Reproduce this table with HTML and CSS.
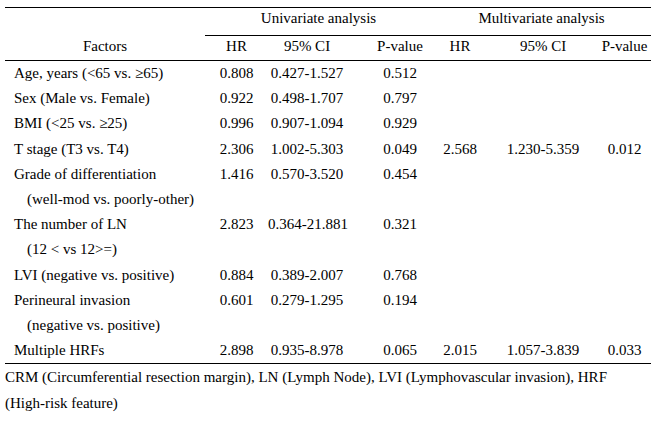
FILE: index.html
```html
<!DOCTYPE html>
<html>
<head>
<meta charset="utf-8">
<link rel="stylesheet" href="styles.css">
</head>
<body>
<div class="page">
  <table class="results">
    <colgroup>
      <col class="c-factor">
      <col class="c-hr">
      <col class="c-ci">
      <col class="c-p">
      <col class="c-hr2">
      <col class="c-ci2">
      <col class="c-p2">
    </colgroup>
    <thead>
      <tr class="head1">
        <th></th>
        <th colspan="3" class="group">Univariate analysis</th>
        <th colspan="3" class="group">Multivariate analysis</th>
      </tr>
      <tr class="head2">
        <th>Factors</th>
        <th>HR</th>
        <th>95% CI</th>
        <th class="pcol">P-value</th>
        <th>HR</th>
        <th>95% CI</th>
        <th>P-value</th>
      </tr>
    </thead>
    <tbody>
      <tr>
        <td class="factor">Age, years (&lt;65 vs. ≥65)</td>
        <td>0.808</td><td>0.427-1.527</td><td class="pcol">0.512</td>
        <td></td><td></td><td></td>
      </tr>
      <tr>
        <td class="factor">Sex (Male vs. Female)</td>
        <td>0.922</td><td>0.498-1.707</td><td class="pcol">0.797</td>
        <td></td><td></td><td></td>
      </tr>
      <tr>
        <td class="factor">BMI (&lt;25 vs. ≥25)</td>
        <td>0.996</td><td>0.907-1.094</td><td class="pcol">0.929</td>
        <td></td><td></td><td></td>
      </tr>
      <tr>
        <td class="factor">T stage (T3 vs. T4)</td>
        <td>2.306</td><td>1.002-5.303</td><td class="pcol">0.049</td>
        <td>2.568</td><td>1.230-5.359</td><td>0.012</td>
      </tr>
      <tr>
        <td class="factor">Grade of differentiation<span class="sub">(well-mod vs. poorly-other)</span></td>
        <td>1.416</td><td>0.570-3.520</td><td class="pcol">0.454</td>
        <td></td><td></td><td></td>
      </tr>
      <tr>
        <td class="factor">The number of LN<span class="sub">(12 &lt; vs 12&gt;=)</span></td>
        <td>2.823</td><td>0.364-21.881</td><td class="pcol">0.321</td>
        <td></td><td></td><td></td>
      </tr>
      <tr>
        <td class="factor">LVI (negative vs. positive)</td>
        <td>0.884</td><td>0.389-2.007</td><td class="pcol">0.768</td>
        <td></td><td></td><td></td>
      </tr>
      <tr>
        <td class="factor">Perineural invasion<span class="sub">(negative vs. positive)</span></td>
        <td>0.601</td><td>0.279-1.295</td><td class="pcol">0.194</td>
        <td></td><td></td><td></td>
      </tr>
      <tr>
        <td class="factor">Multiple HRFs</td>
        <td>2.898</td><td>0.935-8.978</td><td class="pcol">0.065</td>
        <td>2.015</td><td>1.057-3.839</td><td>0.033</td>
      </tr>
    </tbody>
  </table>
  <p class="note">CRM (Circumferential resection margin), LN (Lymph Node), LVI (Lymphovascular invasion), HRF (High-risk feature)</p>
</div>
</body>
</html>
```

FILE: styles.css
```css
html, body {
  margin: 0;
  padding: 0;
  background: #ffffff;
}

.page {
  padding: 7px 0 0 5px;
  width: 646px;
  font-family: "Liberation Serif", "Times New Roman", serif;
  font-size: 15px;
  color: #000000;
}

.results {
  width: 646px;
  border-collapse: collapse;
  table-layout: fixed;
  border-top: 1px solid #000000;
  border-bottom: 1px solid #000000;
  font-family: inherit;
  font-size: inherit;
}

.c-factor { width: 200px; }
.c-hr { width: 63px; }
.c-ci { width: 78px; }
.c-p { width: 86px; }
.c-hr2 { width: 56px; }
.c-ci2 { width: 110px; }
.c-p2 { width: 53px; }

.results th,
.results td {
  padding: 0;
  font-family: inherit;
  font-weight: normal;
  text-align: center;
  vertical-align: top;
  white-space: nowrap;
}

.head1 th {
  height: 27px;
  line-height: 21px;
}

.head1 th.group {
  border-bottom: 1px solid #000000;
}

.head2 th {
  height: 24px;
  line-height: 20px;
  border-bottom: 1px solid #000000;
}

.results td {
  line-height: 25.2px;
}

.results .pcol {
  padding-left: 22px;
}

.results td.factor {
  text-align: left;
  padding-left: 9px;
}

.factor .sub {
  display: block;
  padding-left: 13px;
}

.note {
  margin: 0;
  width: 620px;
  line-height: 26px;
}
```
